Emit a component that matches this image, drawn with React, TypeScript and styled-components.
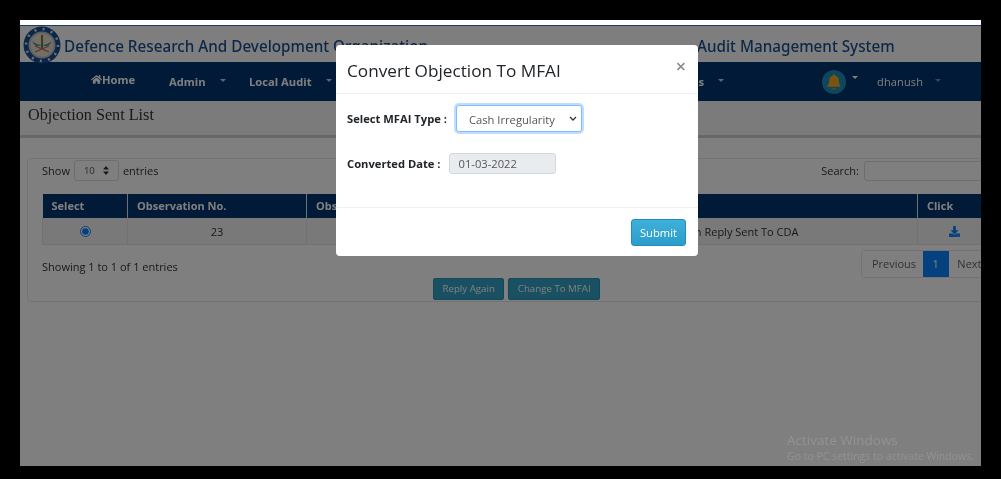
import React from "react";
import styled, { createGlobalStyle } from "styled-components";
import { FaHome, FaDownload } from "react-icons/fa";

const Global = createGlobalStyle`
  html, body { margin: 0; padding: 0; background: #000; }
  body { font-family: "Open Sans", "Noto Sans", sans-serif; font-size: 11px; color: #212529; }
  * { box-sizing: border-box; }
`;

const Frame = styled.div`
  position: relative;
  margin: 20px 0 0 20px;
  width: 961px;
  height: 446px;
  overflow: hidden;
  background: #fff;
  filter: blur(0.35px);
`;
const Page = styled.div`
  width: 1040px;
  height: 100%;
`;
const TopStrip = styled.div`
  height: 6px;
  background: #fff;
  border-bottom: 1px solid #1a3d68;
`;
const Brand = styled.header`
  height: 36px;
  display: flex;
  align-items: center;
  gap: 3px;
  padding-left: 3px;
  background: #fdfdfd;
`;
const BrandText = styled.h1<{ $w?: number }>`
  margin: 3px 0 0;
  font-family: "Noto Sans", "Open Sans", sans-serif;
  font-weight: 500;
  font-size: 15.25px;
  color: #1a4e90;
  white-space: nowrap;
  width: ${(p) => (p.$w ? `${p.$w}px` : "auto")};
`;
const Nav = styled.nav`
  height: 39px;
  display: flex;
  align-items: center;
  background: #003470;
  color: #fff;
  padding-left: 71px;
`;
const NavItem = styled.span<{ $w: number; $end?: boolean }>`
  width: ${(p) => p.$w}px;
  display: inline-flex;
  align-items: center;
  justify-content: ${(p) => (p.$end ? "flex-end" : "flex-start")};
  font-weight: 700;
  font-size: 11.2px;
  white-space: nowrap;
`;
const HomeLink = styled(NavItem)`
  margin-top: -4px;
`;
const Caret = styled.i<{ $c?: string; $x?: number; $up?: number; $o?: number }>`
  display: inline-block;
  margin-left: ${(p) => p.$x ?? 14}px;
  margin-top: ${(p) => -(p.$up ?? 3)}px;
  border-top: 3px solid ${(p) => p.$c ?? "#fff"};
  border-left: 3px solid transparent;
  border-right: 3px solid transparent;
  opacity: ${(p) => p.$o ?? 0.75};
`;
const BellGroup = styled.span`
  display: inline-flex;
  align-items: center;
  margin-left: 98px;
  width: 55px;
`;
const UserName = styled.span`
  display: inline-flex;
  align-items: center;
  font-size: 11px;
  letter-spacing: 0.15px;
`;
const TitleBar = styled.div`
  height: 37px;
  background: #f7f7f7;
  border-bottom: 3px solid #cfcfcf;
  padding: 5px 0 0 8px;
  font-family: "Liberation Serif", serif;
  font-size: 16.2px;
  color: #333;
`;
const Content = styled.main`
  background: #fff;
  padding: 20px 0 0 7px;
`;
const Card = styled.section`
  width: 1020px;
  height: 144px;
  border: 1px solid #e6e6e6;
  border-radius: 4px;
  padding: 0 14px;
`;
const TopRow = styled.div`
  height: 35px;
  padding-bottom: 12px;
  display: flex;
  align-items: center;
  justify-content: space-between;
  font-size: 11px;
  color: #333;
`;
const Length = styled.label`
  display: flex;
  align-items: center;
  gap: 4px;
`;
const LengthSelect = styled.select`
  appearance: none;
  width: 45px;
  height: 21px;
  padding: 0 0 0 9px;
  border: 1px solid #d8dce0;
  border-radius: 3px;
  background: #fff
    url("data:image/svg+xml,%3Csvg xmlns='http://www.w3.org/2000/svg' width='6' height='9'%3E%3Cpath d='M3 0l3 3.5H0zM3 9L0 5.500h6z' fill='%23333'/%3E%3C/svg%3E")
    no-repeat right 9px center;
  font: 9.5px "Open Sans", sans-serif;
  color: #555;
`;
const SearchBox = styled.label`
  display: flex;
  align-items: center;
  gap: 5px;
  margin-right: 38px;
`;
const SearchInput = styled.input`
  width: 130px;
  height: 20px;
  border: 1px solid #d8dce0;
  border-radius: 3px;
`;
const Table = styled.table`
  width: 100%;
  border-collapse: collapse;
  table-layout: fixed;
`;
const Th = styled.th<{ $w?: number }>`
  width: ${(p) => (p.$w ? `${p.$w}px` : "auto")};
  height: 24px;
  padding: 0 0 2px 9px;
  background: #003470;
  border-right: 1px solid #dee2e6;
  color: #fff;
  font-size: 11px;
  font-weight: 700;
  text-align: left;
  white-space: nowrap;
`;
const Td = styled.td<{ $pad?: number }>`
  height: 26px;
  padding: 1px 0 0 ${(p) => p.$pad ?? 0}px;
  background: #f2f2f2;
  border: 1px solid #e3e3e3;
  border-top: 0;
  font-size: 11px;
  color: #333;
  text-align: ${(p) => (p.$pad ? "left" : "center")};
  white-space: nowrap;
`;
const Radio = styled.input`
  margin: 0 0 2px;
  width: 11px;
  height: 11px;
  accent-color: #0a80ff;
  vertical-align: middle;
`;
const DownloadIcon = styled(FaDownload)`
  color: #0a80ff;
  font-size: 11px;
  vertical-align: -1px;
`;
const InfoRow = styled.div`
  display: flex;
  justify-content: space-between;
  padding-top: 5px;
  height: 40px;
  font-size: 11px;
  color: #333;
`;
const Info = styled.span`
  padding-top: 9px;
`;
const Pager = styled.div`
  display: flex;
  height: 28px;
  margin-right: 41px;
  border: 1px solid #e6e6e6;
  border-radius: 3px;
`;
const PageLink = styled.span<{ $active?: boolean }>`
  display: flex;
  align-items: center;
  padding: 0 ${(p) => (p.$active ? 10 : 8.5)}px;
  background: ${(p) => (p.$active ? "#0a80ff" : "#fff")};
  color: ${(p) => (p.$active ? "#fff" : "#666")};
  font-size: 11px;
  &:first-child {
    padding: 0 6.5px 0 10px;
  }
`;
const Actions = styled.div`
  display: flex;
  gap: 4px;
  margin: -7px 0 0 391px;
`;
const ActionButton = styled.button`
  height: 22px;
  padding: 0 8.5px;
  background: #33a0c4;
  border: 1px solid #2e93b5;
  border-radius: 2px;
  color: #fff;
  font: 400 9.7px "Open Sans", sans-serif;
  white-space: nowrap;
`;
const Backdrop = styled.div`
  position: absolute;
  inset: 6px 0 0 0;
  background: rgba(0, 0, 0, 0.5);
`;
const Modal = styled.div`
  position: absolute;
  left: 316px;
  top: 25px;
  width: 362px;
  height: 211px;
  background: #fff;
  border-radius: 4px;
  display: flex;
  flex-direction: column;
`;
const ModalHeader = styled.div`
  height: 49px;
  padding: 2px 12px 0 11px;
  display: flex;
  align-items: center;
  justify-content: space-between;
  border-bottom: 1px solid #eef0f2;
`;
const ModalTitle = styled.h2`
  margin: 0;
  font-weight: 500;
  font-size: 17.2px;
  color: #212529;
`;
const Close = styled.span`
  font-size: 18px;
  font-weight: 600;
  color: #8a8a8a;
  margin-top: -8px;
`;
const ModalBody = styled.div`
  height: 114px;
  padding: 11px 0 0 11px;
  border-bottom: 1px solid #eef0f2;
`;
const Field = styled.div<{ $gap: number; $h: number; $top?: number }>`
  display: flex;
  align-items: center;
  gap: ${(p) => p.$gap}px;
  height: ${(p) => p.$h}px;
  margin-top: ${(p) => p.$top ?? 0}px;
`;
const FieldLabel = styled.label`
  font-weight: 700;
  font-size: 11.2px;
  color: #212529;
  white-space: nowrap;
`;
const TypeSelect = styled.select`
  appearance: none;
  width: 126px;
  height: 27px;
  padding: 1px 0 0 12px;
  background: #fff
    url("data:image/svg+xml,%3Csvg xmlns='http://www.w3.org/2000/svg' width='8' height='5'%3E%3Cpath d='M1 1l3 3 3-3' fill='none' stroke='%23333' stroke-width='1.300'/%3E%3C/svg%3E")
    no-repeat right 4px center;
  border: 1px solid #80bdff;
  border-radius: 3px;
  box-shadow: 0 0 0 2px rgba(0, 123, 255, 0.25);
  font: 11.2px "Open Sans", sans-serif;
  color: #555;
`;
const DateInput = styled.input`
  width: 107px;
  height: 21px;
  padding: 0 9px;
  background: #e9ecef;
  border: 1px solid #d5d9dd;
  border-radius: 3px;
  font: 11.2px "Open Sans", sans-serif;
  color: #555;
`;
const ModalFooter = styled.div`
  flex: 1;
  display: flex;
  align-items: flex-start;
  justify-content: flex-end;
  padding: 11px 12px 0 0;
`;
const SubmitButton = styled.button`
  width: 55px;
  height: 27px;
  background: linear-gradient(#3fb0d9, #2a9dcb);
  border: 1px solid #1f8dbd;
  border-radius: 3px;
  color: #fff;
  font: 500 11.2px "Open Sans", sans-serif;
`;
const Watermark = styled.div`
  position: absolute;
  left: 767px;
  top: 411px;
  color: rgba(255, 255, 255, 0.15);
  font-size: 13.5px;
  line-height: 18px;
  white-space: nowrap;
`;
const WatermarkSub = styled.div`
  font-size: 10.5px;
  line-height: 14px;
`;

const Emblem = () => (
  <svg width="38" height="38" viewBox="0 0 38 38" aria-hidden="true" style={{ flex: "none", marginTop: 1 }}>
    <circle cx="19" cy="19" r="18.5" fill="#1a4e90" />
    <circle cx="19" cy="19" r="16" fill="none" stroke="#dfe5ee" strokeWidth="2.5" strokeDasharray="2 6.4" />
    <circle cx="19" cy="19" r="12.5" fill="#e6dfcb" stroke="#b9c0c8" strokeWidth="2" />
    <path d="M9 15c4 3 7 4 10 4-3 1.500-6 1.500-8-1zM29 15c-4 3-7 4-10 4 3 1.500 6 1.500 8-1z" fill="#3b8fb0" />
    <path d="M19 9v13" stroke="#6f7a45" strokeWidth="2" />
    <path d="M12 26l14-6M26 26l-14-6" stroke="#c0634a" strokeWidth="1.3" />
  </svg>
);

const Bell = () => (
  <svg width="24" height="24" viewBox="0 0 24 24" aria-hidden="true">
    <circle cx="12" cy="12" r="12" fill="#1d8fb8" />
    <path d="M12 4.500c.8 0 1.300.5 1.300 1.200 2.500.6 3.400 2.700 3.500 5 .1 2.400.6 3.900 1.800 5.300v.8H5.400V16c1.200-1.400 1.700-2.900 1.800-5.300.1-2.300 1-4.400 3.500-5 0-.7.5-1.200 1.300-1.200z" fill="#f5a623" />
    <path d="M10 18.300h4c-.2 1-1 1.600-2 1.600s-1.800-.6-2-1.600z" fill="#d9861a" />
  </svg>
);

export default function App() {
  return (
    <>
      <Global />
      <Frame>
        <Page>
          <TopStrip />
          <Brand>
            <Emblem />
            <BrandText $w={630}>Defence Research And Development Organization</BrandText>
            <BrandText>Audit Management System</BrandText>
          </Brand>
          <Nav>
            <HomeLink $w={78}>
              <FaHome size={11} />
              Home
            </HomeLink>
            <NavItem $w={80}>
              Admin
              <Caret />
            </NavItem>
            <NavItem $w={90}>
              Local Audit
              <Caret />
            </NavItem>
            <NavItem $w={385} $end>
              Reports
              <Caret />
            </NavItem>
            <BellGroup>
              <Bell />
              <Caret $x={6} $up={8} $o={1} />
            </BellGroup>
            <UserName>
              dhanush
              <Caret $c="#2a9cff" $x={12} $o={1} />
            </UserName>
          </Nav>
          <TitleBar>Objection Sent List</TitleBar>
          <Content>
            <Card>
              <TopRow>
                <Length>
                  Show
                  <LengthSelect defaultValue="10">
                    <option>10</option>
                  </LengthSelect>
                  entries
                </Length>
                <SearchBox>
                  Search:
                  <SearchInput />
                </SearchBox>
              </TopRow>
              <Table>
                <thead>
                  <tr>
                    <Th $w={85}>Select</Th>
                    <Th $w={179}>Observation No.</Th>
                    <Th $w={320}>Observation Title</Th>
                    <Th>Status</Th>
                    <Th $w={114}>Click</Th>
                  </tr>
                </thead>
                <tbody>
                  <tr>
                    <Td>
                      <Radio type="radio" defaultChecked name="obs" />
                    </Td>
                    <Td>23</Td>
                    <Td>Cash Book</Td>
                    <Td $pad={25}>Objection Reply Sent To CDA</Td>
                    <Td $pad={31}>
                      <DownloadIcon />
                    </Td>
                  </tr>
                </tbody>
              </Table>
              <InfoRow>
                <Info>Showing 1 to 1 of 1 entries</Info>
                <Pager>
                  <PageLink>Previous</PageLink>
                  <PageLink $active>1</PageLink>
                  <PageLink>Next</PageLink>
                </Pager>
              </InfoRow>
              <Actions>
                <ActionButton>Reply Again</ActionButton>
                <ActionButton>Change To MFAI</ActionButton>
              </Actions>
            </Card>
          </Content>
        </Page>
        <Backdrop />
        <Modal>
          <ModalHeader>
            <ModalTitle>Convert Objection To MFAI</ModalTitle>
            <Close>×</Close>
          </ModalHeader>
          <ModalBody>
            <Field $gap={9} $h={27}>
              <FieldLabel>Select MFAI Type :</FieldLabel>
              <TypeSelect defaultValue="Cash Irregularity">
                <option>Cash Irregularity</option>
              </TypeSelect>
            </Field>
            <Field $gap={8} $h={21} $top={21}>
              <FieldLabel>Converted Date :</FieldLabel>
              <DateInput readOnly value="01-03-2022" />
            </Field>
          </ModalBody>
          <ModalFooter>
            <SubmitButton>Submit</SubmitButton>
          </ModalFooter>
        </Modal>
        <Watermark>
          Activate Windows
          <WatermarkSub>Go to PC settings to activate Windows.</WatermarkSub>
        </Watermark>
      </Frame>
    </>
  );
}
